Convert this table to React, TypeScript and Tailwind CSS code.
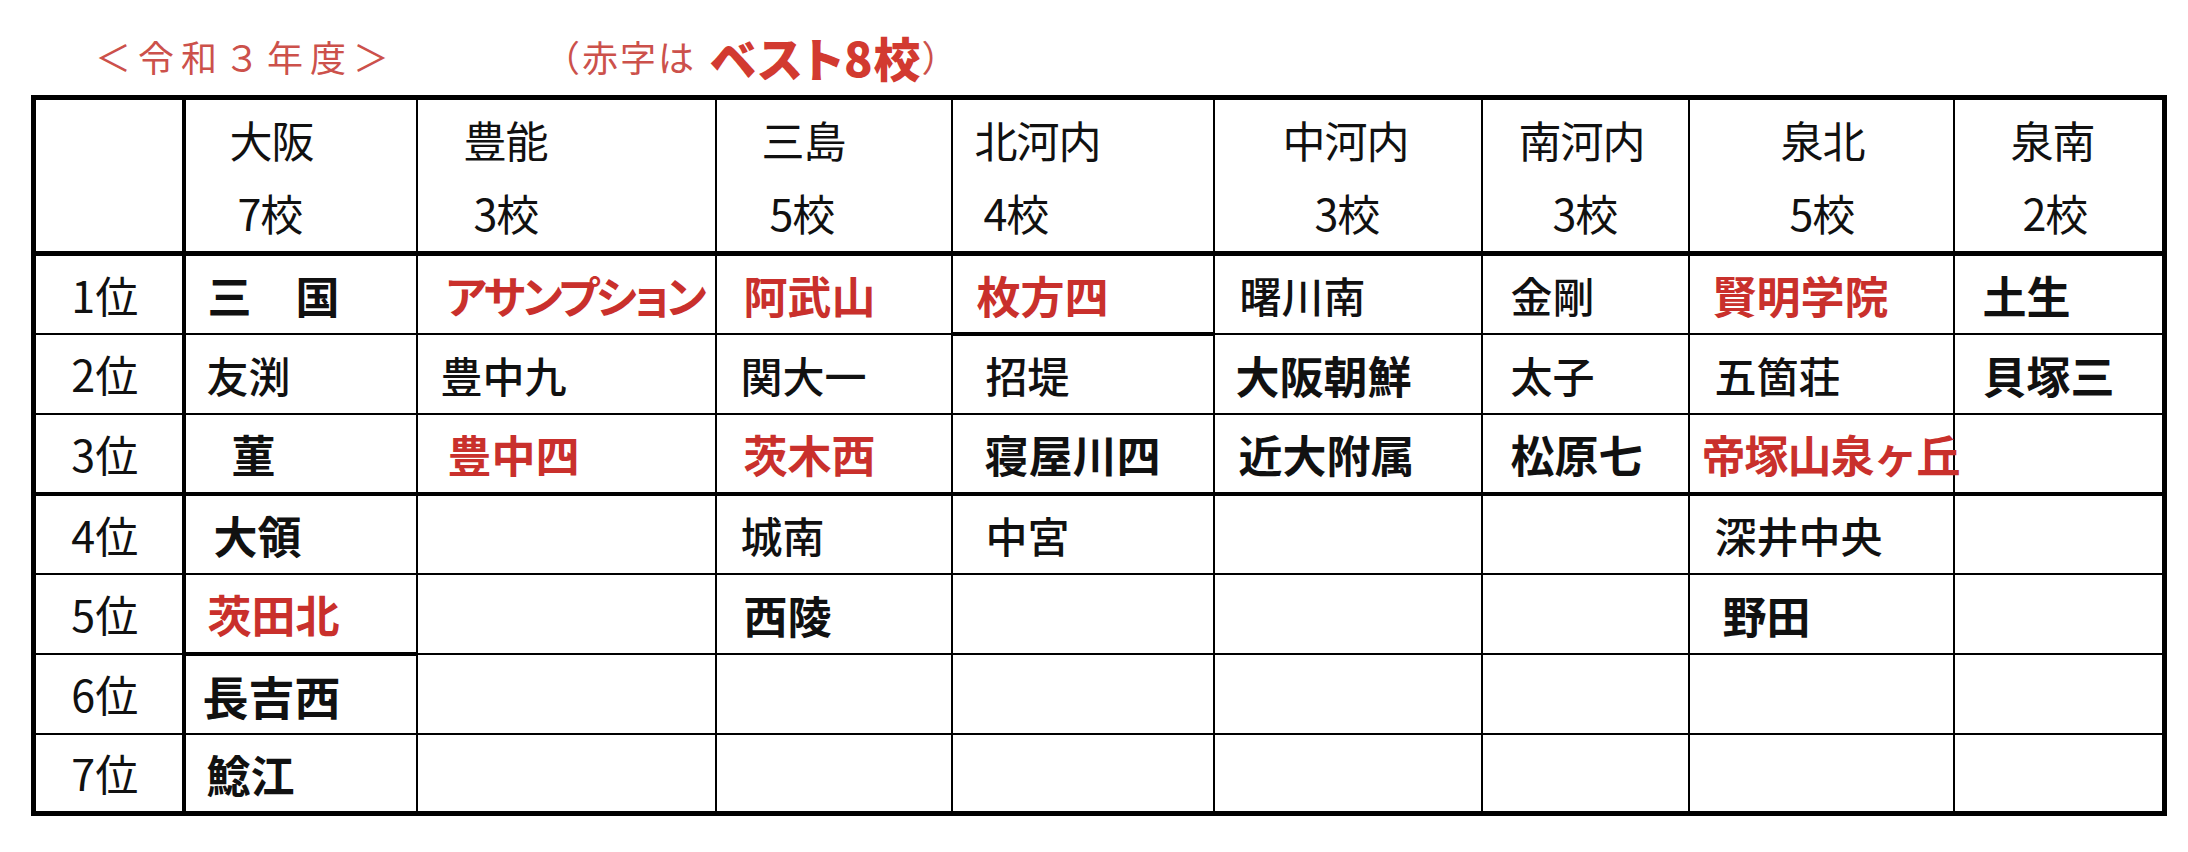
import React from "react";

type Cell = { t: string; b?: boolean; r?: boolean; pl?: string; x?: string };

const F = "[font-family:'Noto_Sans_CJK_JP','Noto_Sans_CJK_SC',sans-serif]";

const headers: { a: string; b: string; pa: string; pb: string }[] = [
  { a: "大阪", b: "7校", pa: "pl-[44px]", pb: "pl-[52px]" },
  { a: "豊能", b: "3校", pa: "pl-[46px]", pb: "pl-[56px]" },
  { a: "三島", b: "5校", pa: "pl-[45px]", pb: "pl-[53px]" },
  { a: "北河内", b: "4校", pa: "pl-[22px]", pb: "pl-[31px]" },
  { a: "中河内", b: "3校", pa: "pl-[68px]", pb: "pl-[100px]" },
  { a: "南河内", b: "3校", pa: "pl-[36px]", pb: "pl-[70px]" },
  { a: "泉北", b: "5校", pa: "pl-[91px]", pb: "pl-[100px]" },
  { a: "泉南", b: "2校", pa: "pl-[56px]", pb: "pl-[68px]" },
];

const E: Cell = { t: "" };

const rows: Cell[][] = [
  [
    { t: "三　国", b: true, pl: "pl-[22px]" },
    { t: "アサンプション", r: true, pl: "pl-[28px]", x: "[font-feature-settings:'palt'] tracking-[-3px]" },
    { t: "阿武山", r: true, pl: "pl-[27px]" },
    { t: "枚方四", r: true, pl: "pl-[24px]" },
    { t: "曙川南", pl: "pl-[25px]" },
    { t: "金剛", pl: "pl-[28px]" },
    { t: "賢明学院", r: true, pl: "pl-[23px]" },
    { t: "土生", b: true, pl: "pl-[28px]" },
  ],
  [
    { t: "友渕", pl: "pl-[21px]" },
    { t: "豊中九", pl: "pl-[23px]" },
    { t: "関大一", pl: "pl-[24px]" },
    { t: "招堤", pl: "pl-[33px]" },
    { t: "大阪朝鮮", b: true, pl: "pl-[21px]" },
    { t: "太子", pl: "pl-[28px]" },
    { t: "五箇荘", pl: "pl-[25px]" },
    { t: "貝塚三", b: true, pl: "pl-[28px]" },
  ],
  [
    { t: "菫", b: true, pl: "pl-[46px]" },
    { t: "豊中四", r: true, pl: "pl-[30px]" },
    { t: "茨木西", r: true, pl: "pl-[27px]" },
    { t: "寝屋川四", b: true, pl: "pl-[32px]" },
    { t: "近大附属", b: true, pl: "pl-[24px]" },
    { t: "松原七", b: true, pl: "pl-[28px]" },
    { t: "帝塚山泉ヶ丘", r: true, pl: "pl-[12px]", x: "text-[40px] tracking-[-1px]" },
    E,
  ],
  [
    { t: "大領", b: true, pl: "pl-[28px]" },
    E,
    { t: "城南", pl: "pl-[24px]" },
    { t: "中宮", pl: "pl-[33px]" },
    E,
    E,
    { t: "深井中央", pl: "pl-[25px]" },
    E,
  ],
  [
    { t: "茨田北", r: true, pl: "pl-[22px]" },
    E,
    { t: "西陵", b: true, pl: "pl-[27px]" },
    E,
    E,
    E,
    { t: "野田", b: true, pl: "pl-[33px]" },
    E,
  ],
  [{ t: "長吉西", b: true, pl: "pl-[17px]", x: "text-[46px]" }, E, E, E, E, E, E, E],
  [{ t: "鯰江", b: true, pl: "pl-[21px]" }, E, E, E, E, E, E, E],
];

const colW = [
  "w-[150px]",
  "w-[233px]",
  "w-[299px]",
  "w-[236px]",
  "w-[262px]",
  "w-[268px]",
  "w-[207px]",
  "w-[265px]",
  "w-[211px]",
];

function bottomBorder(ri: number, ci: number): string {
  if (ri === 2) return "border-b-4";
  if (ri === 6) return "border-b-[5px]";
  if (ci === 3 && ri === 0) return "border-b-4";
  if (ci === 0 && ri === 4) return "border-b-4";
  return "border-b-2";
}

export default function App() {
  return (
    <div className={`min-h-[852px] w-[2188px] bg-white text-[#111] ${F}`}>
      <div className="flex h-[44px] items-center pt-[34px] pb-[17px] box-content">
        <span className="pl-[95px] text-[36px] leading-none text-[#cc514b] tracking-[7px]">
          ＜令和３年度＞
        </span>
        <span className="pl-[148px] text-[36px] leading-none text-[#cc514b] tracking-[2px]">（赤字は</span>
        <span className="pl-[14px] text-[47px] font-black leading-none text-[#d23a30] [font-feature-settings:'palt'] tracking-[1px]">
          ベスト8校
        </span>
        <span className="text-[36px] leading-none text-[#cc514b]">）</span>
      </div>
      <div className="pl-[31px]">
        <table className="table-fixed border-collapse border-[5px] border-black w-[2131px]">
          <colgroup>
            {colW.map((w, i) => (
              <col key={i} className={w} />
            ))}
          </colgroup>
          <thead>
            <tr className="h-[156px]">
              <th className="border-2 border-r-4 border-b-[5px] border-black" />
              {headers.map((h, i) => (
                <th
                  key={i}
                  className={`border-2 border-b-[5px] border-black p-0 text-left align-top font-normal text-[43px] leading-none ${i === 7 ? "border-r-[5px]" : ""}`}
                >
                  <div className={`h-[43px] mt-[18px] ${h.pa} tracking-[-1px]`}>{h.a}</div>
                  <div className={`h-[43px] mt-[30px] ${h.pb} tracking-[-1px]`}>{h.b}</div>
                </th>
              ))}
            </tr>
          </thead>
          <tbody>
            {rows.map((row, ri) => (
              <tr key={ri} className="h-[80px]">
                <td
                  className={`border-2 border-r-4 border-black p-0 text-center text-[43px] leading-none font-normal ${ri === 2 ? "border-b-4" : "border-b-2"}`}
                >
                  <span className="pr-[8px]">{ri + 1}位</span>
                </td>
                {row.map((c, ci) => (
                  <td
                    key={ci}
                    className={`border-2 border-black p-0 align-middle ${bottomBorder(ri, ci)} ${ci === 7 ? "border-r-[5px]" : ""}`}
                  >
                    {c.t && (
                      <div
                        className={`${c.pl ?? ""} whitespace-nowrap leading-none pt-[2px] ${c.b || c.r ? "font-bold text-[44px]" : "font-medium text-[42px]"} ${c.r ? "text-[#c9302c]" : "text-[#111]"} ${c.x ?? ""}`}
                      >
                        {c.t}
                      </div>
                    )}
                  </td>
                ))}
              </tr>
            ))}
          </tbody>
        </table>
      </div>
    </div>
  );
}
